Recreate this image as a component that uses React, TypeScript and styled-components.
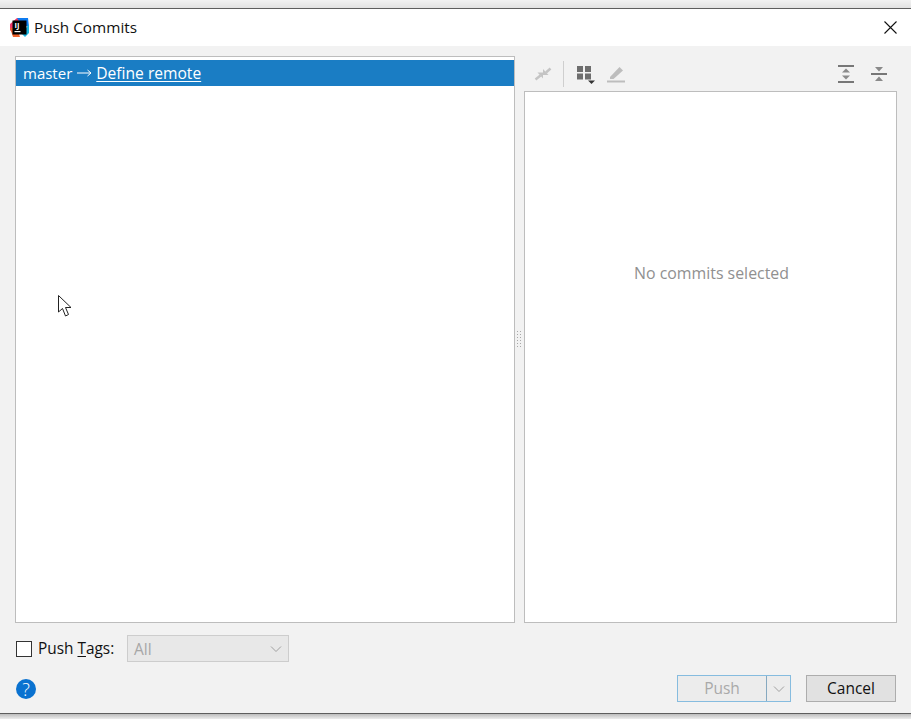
import * as React from 'react';
import styled, { createGlobalStyle } from 'styled-components';

const FONT = '"Open Sans", "Noto Sans", "Liberation Sans", sans-serif';

const GlobalStyle = createGlobalStyle`
  html, body { margin: 0; padding: 0; background: #f0f0f0; }
  body { font-family: ${FONT}; overflow: hidden; }
  * { box-sizing: border-box; }
`;

const Screen = styled.div`
  position: relative;
  width: 911px;
  height: 719px;
  padding: 8px 0 5px;
  background: linear-gradient(#f2f2f2 0, #e2e2e2 8px, #e2e2e2 712px, #bdbdbd 714px, #ececec 719px);
`;

const Dialog = styled.div`
  height: 706px;
  display: flex;
  flex-direction: column;
  background: #f2f2f2;
  border-top: 1px solid #5e5e5e;
  border-bottom: 1px solid #5e5e5e;
`;

const TitleBar = styled.div`
  height: 37px;
  flex: none;
  display: flex;
  align-items: center;
  padding: 0 13px 1px 9px;
  background: #fff;
`;

const Title = styled.span`
  margin-left: 4px;
  font-size: 15.3px;
  color: #111;
  flex: 1;
`;

const Content = styled.div`
  flex: 1;
  display: flex;
  flex-direction: column;
  padding: 10px 14px 0 15px;
`;

const Split = styled.div`
  display: flex;
  height: 567px;
  flex: none;
`;

const TreePanel = styled.div`
  width: 500px;
  flex: none;
  padding: 3px 0 0;
  background: #fff;
  border: 1px solid #bdbdbd;
`;

const TreeRow = styled.div`
  height: 26px;
  display: flex;
  align-items: center;
  padding-left: 7px;
  background: #1a7dc4;
  color: #fff;
  font-size: 15px;
  white-space: pre;
`;

const Arrow = styled.span`
  display: inline-flex;
  margin: 0 4px 0 5px;
`;

const RemoteLink = styled.span`
  font-size: 15.6px;
  text-decoration: underline;
  text-underline-offset: 2px;
  text-decoration-thickness: 1px;
`;

const Splitter = styled.div`
  width: 9px;
  flex: none;
  display: flex;
  align-items: center;
  justify-content: center;
`;

const Grip = styled.div`
  width: 6px;
  height: 18px;
  margin: -1px 1px 0 0;
  background-image: radial-gradient(#a8a8a8 0.8px, transparent 1px);
  background-size: 3px 3px;
`;

const RightColumn = styled.div`
  width: 373px;
  flex: none;
  display: flex;
  flex-direction: column;
`;

const Toolbar = styled.div`
  height: 35px;
  flex: none;
  display: flex;
  align-items: center;
  padding: 1px 10px 0 10px;
`;

const ToolIcon = styled.svg<{ $gap?: number }>`
  flex: none;
  display: block;
  margin-left: ${(p) => p.$gap || 0}px;
`;

const ToolSeparator = styled.div`
  width: 1px;
  height: 26px;
  margin: 0 13px 0 11px;
  background: #cfcfcf;
`;

const ToolSpacer = styled.div`
  flex: 1;
`;

const DetailsPanel = styled.div`
  flex: 1;
  display: flex;
  justify-content: center;
  padding: 170px 0 0 2px;
  background: #fff;
  border: 1px solid #bdbdbd;
  color: #909090;
  font-size: 15.9px;
`;

const OptionsRow = styled.div`
  display: flex;
  align-items: center;
  height: 27px;
  margin-top: 12px;
  flex: none;
`;

const CheckBox = styled.div`
  width: 16px;
  height: 16px;
  margin-left: 1px;
  background: #fff;
  border: 1px solid #333;
`;

const OptionLabel = styled.span`
  margin: -1px 0 0 6px;
  font-size: 15.4px;
  color: #111;
  width: 89px;
  flex: none;
`;

const Mnemonic = styled.span`
  text-decoration: underline;
  text-underline-offset: 2px;
`;

const ComboBox = styled.div`
  width: 162px;
  height: 27px;
  display: flex;
  align-items: center;
  justify-content: space-between;
  padding: 0 6px;
  background: #e8e8e8;
  border: 1px solid #cdcdcd;
  color: #a6a6a6;
  font-size: 15.5px;
`;

const Footer = styled.div`
  display: flex;
  align-items: center;
  height: 27px;
  margin-top: 13px;
  flex: none;
`;

const HelpButton = styled.div`
  width: 20px;
  height: 20px;
  margin-left: 1px;
  border-radius: 50%;
  background: #0a72d0;
  color: #fff;
  font-size: 18px;
  font-weight: 300;
  line-height: 20px;
  text-align: center;
`;

const FooterSpacer = styled.div`
  flex: 1;
`;

const SplitButton = styled.div`
  width: 114px;
  height: 27px;
  display: flex;
  background: #ececec;
  border: 1px solid #86bcdf;
`;

const SplitLabel = styled.span`
  flex: 1;
  text-align: center;
  font-size: 15.5px;
  line-height: 24px;
  color: #a9a9a9;
`;

const SplitArrow = styled.div`
  width: 24px;
  display: flex;
  align-items: center;
  justify-content: center;
  border-left: 1px solid #86a9c0;
`;

const Button = styled.div`
  width: 90px;
  height: 27px;
  margin-left: 15px;
  margin-right: 1px;
  background: #e1e1e1;
  border: 1px solid #adadad;
  color: #111;
  font-size: 15.5px;
  line-height: 24px;
  text-align: center;
`;

const Cursor = styled.svg`
  position: absolute;
  left: 58px;
  top: 295px;
`;

const AppIcon = () => (
  <svg width="21" height="21" viewBox="0 0 21 21">
    <path d="M1 7 L8 1 L13 2 L4 16 L1 13 Z" fill="#f0396b" />
    <path d="M8 1 L19 1 L20 10 L12 7 Z" fill="#0d7bf0" />
    <path d="M1 11 L4 20 L11 20 L8 11 Z" fill="#f2632a" />
    <path d="M13 17 L20 7 L20 16 L16 20 Z" fill="#17b5e0" />
    <rect x="3.5" y="3.5" width="14" height="14" fill="#000" />
    <text x="5.5" y="11" fontSize="7.5" fontWeight="700" fill="#fff" fontFamily={FONT}>IJ</text>
    <rect x="5.5" y="14" width="6" height="1.2" fill="#fff" />
  </svg>
);

const Chevron = ({ color }: { color: string }) => (
  <svg width="12" height="8" viewBox="0 0 12 8">
    <path d="M1 1.5 L6 6.5 L11 1.5" fill="none" stroke={color} strokeWidth="1" />
  </svg>
);

const App: React.FC = () => {
  return (
    <Screen>
      <GlobalStyle />
      <Dialog>
        <TitleBar>
          <AppIcon />
          <Title>Push Commits</Title>
          <svg width="15" height="15" viewBox="0 0 15 15">
            <path d="M1.5 1.5 L13.5 13.5 M13.5 1.5 L1.5 13.5" stroke="#111" strokeWidth="1.1" />
          </svg>
        </TitleBar>
        <Content>
          <Split>
            <TreePanel>
              <TreeRow>
                master
                <Arrow>
                  <svg width="15" height="10" viewBox="0 0 15 10">
                    <path d="M0 5 H14 M10.5 2 L14 5 L10.5 8" fill="none" stroke="#fff" strokeWidth="1" />
                  </svg>
                </Arrow>
                <RemoteLink>Define remote</RemoteLink>
              </TreeRow>
            </TreePanel>
            <Splitter>
              <Grip />
            </Splitter>
            <RightColumn>
              <Toolbar>
                <ToolIcon width="18" height="18" viewBox="0 0 18 18">
                  <path d="M1.5 14.5 L6.5 10.5" fill="none" stroke="#c4c4c4" strokeWidth="2.4" />
                  <path d="M3.5 7.5 H9 V13.5 Z" fill="#c4c4c4" />
                  <path d="M16.5 3.5 L12 7.5" fill="none" stroke="#c4c4c4" strokeWidth="2.4" />
                  <path d="M14.5 10 H9 V4 Z" fill="#c4c4c4" />
                </ToolIcon>
                <ToolSeparator />
                <ToolIcon width="19" height="19" viewBox="0 0 19 19">
                  <rect x="0" y="1" width="6" height="6" fill="#6e6e6e" />
                  <rect x="8" y="1" width="6" height="6" fill="#6e6e6e" />
                  <rect x="0" y="8.5" width="6" height="6" fill="#6e6e6e" />
                  <rect x="8" y="8.5" width="6" height="6" fill="#6e6e6e" />
                  <path d="M11 15.5 H18 L14.5 19 Z" fill="#333" />
                </ToolIcon>
                <ToolIcon $gap={10} width="20" height="18" viewBox="0 0 20 18">
                  <path d="M4 12 L13.5 2 L17 5.5 L7.5 14 H4 Z" fill="#bdbdbd" />
                  <rect x="1" y="15.5" width="18" height="2" fill="#bdbdbd" />
                </ToolIcon>
                <ToolSpacer />
                <ToolIcon width="16" height="18" viewBox="0 0 16 18">
                  <rect x="0" y="0" width="16" height="2" fill="#777" />
                  <rect x="0" y="16" width="16" height="2" fill="#777" />
                  <path d="M8 3.5 L12 7.5 H4 Z M8 14.5 L12 10.5 H4 Z" fill="#8a8a8a" />
                </ToolIcon>
                <ToolIcon $gap={17} width="16" height="16" viewBox="0 0 16 16">
                  <rect x="0" y="7" width="16" height="2" fill="#777" />
                  <path d="M8 5.5 L12 1 H4 Z M8 10.5 L12 15 H4 Z" fill="#8a8a8a" />
                </ToolIcon>
              </Toolbar>
              <DetailsPanel>No commits selected</DetailsPanel>
            </RightColumn>
          </Split>
          <OptionsRow>
            <CheckBox />
            <OptionLabel>
              Push <Mnemonic>T</Mnemonic>ags:
            </OptionLabel>
            <ComboBox>
              All
              <Chevron color="#a0a0a0" />
            </ComboBox>
          </OptionsRow>
          <Footer>
            <HelpButton>?</HelpButton>
            <FooterSpacer />
            <SplitButton>
              <SplitLabel>Push</SplitLabel>
              <SplitArrow>
                <Chevron color="#a0a0a0" />
              </SplitArrow>
            </SplitButton>
            <Button>Cancel</Button>
          </Footer>
        </Content>
      </Dialog>
      <Cursor width="16" height="24" viewBox="0 0 16 24">
        <path d="M0.5 0.5 V17 L4.5 13.5 L7.5 21 L10.5 19.5 L7.5 12.5 H13 Z" fill="#fff" stroke="#222" strokeWidth="1" />
      </Cursor>
    </Screen>
  );
};

export default App;
